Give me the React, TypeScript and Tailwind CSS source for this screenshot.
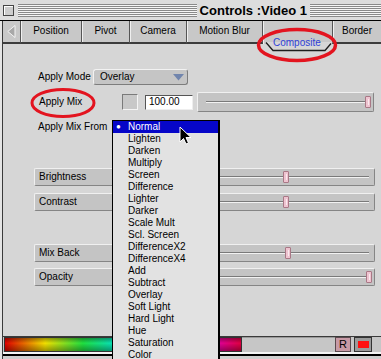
import React from "react";

const blendModes = [
  "Normal",
  "Lighten",
  "Darken",
  "Multiply",
  "Screen",
  "Difference",
  "Lighter",
  "Darker",
  "Scale Mult",
  "Scl. Screen",
  "DifferenceX2",
  "DifferenceX4",
  "Add",
  "Subtract",
  "Overlay",
  "Soft Light",
  "Hard Light",
  "Hue",
  "Saturation",
  "Color",
];

const tabs = [
  { label: "Position", w: "w-[61px]" },
  { label: "Pivot", w: "w-[48px]" },
  { label: "Camera", w: "w-[57px]" },
  { label: "Motion Blur", w: "w-[76px]" },
];

const stripes =
  "bg-[repeating-linear-gradient(to_bottom,#8a8a8a_0px,#8a8a8a_1px,#f6f6f6_1px,#f6f6f6_2px)]";

function Thumb({ left }: { left: number }) {
  return (
    <div
      className="absolute top-[2px] flex h-[12px] w-[6px] justify-center rounded-[1px] border border-[#a97886] bg-[#eec4d0]"
      style={{ left }}
    >
      <div className="mt-[2px] h-[6px] w-[1px] bg-[#fbe8ee]" />
    </div>
  );
}

function Track({ from }: { from: number }) {
  return (
    <div
      className="absolute right-[5px] top-[7px] h-0 border-b border-t border-b-[#f2f2f2] border-t-[#7a7a7a]"
      style={{ left: from }}
    />
  );
}

function ParamBar({ label, thumb }: { label: string; thumb: number }) {
  return (
    <div className="relative ml-[31px] flex h-[18px] w-[341px] items-center rounded-[2px] border border-b-[#858585] border-l-[#f0f0f0] border-r-[#858585] border-t-[#f0f0f0] bg-[#c4c4c4] pl-[4px]">
      <span>{label}</span>
      <Track from={90} />
      <Thumb left={thumb} />
    </div>
  );
}

export default function App() {
  return (
    <div className="relative h-[359px] w-[381px] overflow-hidden bg-[#d6d6d6] font-['Liberation_Sans',Arial,sans-serif] text-[10px] leading-none text-black">
      {/* title bar */}
      <div className="flex h-[21px] items-center border-b border-black bg-[#dddddd]">
        <div className="ml-[3px] h-[11px] w-[11px] border border-[#454545] bg-[#cdcdcd] shadow-[inset_1px_1px_0_#fff]" />
        <div className={`ml-[4px] h-[13px] flex-1 ${stripes}`} />
        <div className="px-[3px] text-[13px] font-bold">Controls :Video 1</div>
        <div className={`h-[13px] w-[71px] ${stripes}`} />
      </div>

      <div className="flex h-[338px] bg-[#e4e4e4] pl-[2px]">
        <div className="flex flex-1 flex-col border-l border-[#3a3a3a]">
          {/* tabs */}
          <div className="relative z-10 flex h-[23px] shrink-0 bg-[#c8c8c8]">
            <div className="flex w-[18px] items-center justify-center border-b-2 border-r border-b-[#3c3c3c] border-r-[#555]">
              <svg width="9" height="13" viewBox="0 0 9 13">
                <path d="M8 0.5 L0.8 6.5 L8 12.5 Z" fill="#a8a8a8" stroke="#f4f4f4" strokeWidth="1" />
              </svg>
            </div>
            {tabs.map((t) => (
              <div
                key={t.label}
                className={`flex ${t.w} items-center justify-center border-b-2 border-r border-b-[#3c3c3c] border-r-[#555] pb-[1px] shadow-[inset_1px_0_0_#efefef]`}
              >
                {t.label}
              </div>
            ))}
            <div className="relative w-[70px] border-r border-[#555] shadow-[inset_1px_0_0_#efefef]">
              <svg className="absolute left-0 top-[21px]" width="70" height="10" viewBox="0 0 70 10">
                <path d="M0 0 L3 0 L10 8 L62 8 L68 1 L70 0 Z" fill="#d6d6d6" />
                <path d="M3 0.5 L10 8.5 L62 8.5 L68 1.5" fill="none" stroke="#1c1c1c" strokeWidth="1.3" />
              </svg>
              <span className="absolute left-[10px] top-[17px] text-[#2f3fd8]">Composite</span>
            </div>
            <div className="flex flex-1 items-center justify-center border-b-2 border-b-[#3c3c3c] pb-[1px] shadow-[inset_1px_0_0_#efefef]">
              Border
            </div>
          </div>

          {/* panel body */}
          <div className="flex h-[292px] shrink-0 flex-col bg-[#d6d6d6]">
            <div className="mt-[25px] flex h-[16px] items-center">
              <span className="ml-[35px] w-[55px]">Apply Mode</span>
              <div className="flex h-[16px] w-[95px] items-center justify-between rounded-[3px] border border-b-[#7d7d7d] border-l-[#f2f2f2] border-r-[#7d7d7d] border-t-[#f2f2f2] bg-[#c5c5c5] pl-[6px] pr-[3px]">
                <span>Overlay</span>
                <svg width="11" height="7" viewBox="0 0 11 7">
                  <path d="M0 0 L11 0 L5.5 6.5 Z" fill="#7185ad" />
                </svg>
              </div>
            </div>

            <div className="mt-[7px] flex h-[20px] items-center">
              <span className="ml-[36px] w-[83px]">Apply Mix</span>
              <div className="h-[16px] w-[16px] border border-b-[#f4f4f4] border-l-[#7a7a7a] border-r-[#f4f4f4] border-t-[#7a7a7a] bg-[#c8c8c8]" />
              <div className="ml-[7px] flex h-[15px] w-[48px] items-center border border-b-[#eee] border-l-[#555] border-r-[#eee] border-t-[#555] bg-white pl-[3px]">
                100.00
              </div>
              <div className="relative ml-[4px] h-[20px] w-[177px] rounded-[2px] border border-b-[#858585] border-l-[#f0f0f0] border-r-[#858585] border-t-[#f0f0f0] bg-[#c4c4c4]">
                <div className="absolute left-[8px] right-[5px] top-[8px] h-0 border-b border-t border-b-[#f2f2f2] border-t-[#7a7a7a]" />
                <div className="absolute left-[167px] top-[3px] flex h-[12px] w-[6px] justify-center rounded-[1px] border border-[#a97886] bg-[#eec4d0]">
                  <div className="mt-[2px] h-[6px] w-[1px] bg-[#fbe8ee]" />
                </div>
              </div>
            </div>

            <div className="mt-[8px] flex h-[14px] items-center">
              <span className="ml-[35px]">Apply Mix From</span>
            </div>

            <div className="mt-[34px]">
              <ParamBar label="Brightness" thumb={248} />
            </div>
            <div className="mt-[7px]">
              <ParamBar label="Contrast" thumb={248} />
            </div>
            <div className="mt-[33px]">
              <ParamBar label="Mix Back" thumb={250} />
            </div>
            <div className="mt-[6px]">
              <ParamBar label="Opacity" thumb={331} />
            </div>
          </div>

          {/* bottom bar */}
          <div className="flex h-[16px] shrink-0 items-stretch border-t border-[#3a3a3a] bg-[#c6c6c6]">
            <div className="relative ml-[1px] w-[238px] border border-[#333] bg-[linear-gradient(to_right,#e00000,#f2e000_17%,#20e040_33%,#00e0e0_50%,#1020e0_67%,#e000e0_83%,#e00040)]">
              <div className="absolute inset-0 bg-[linear-gradient(to_bottom,rgba(0,0,0,0.35),rgba(0,0,0,0)_40%,rgba(0,0,0,0.35))]" />
            </div>
            <div className="flex-1 border-t border-[#9a9a9a]" />
            <div className="flex w-[16px] items-center justify-center border border-[#5a4a4e] bg-[#c89aa6] text-[11px]">
              R
            </div>
            <div className="ml-[3px] flex w-[18px] items-center justify-center border border-[#333] bg-[#9a9a9a]">
              <div className="h-[7px] w-[11px] bg-[#ff1010]" />
            </div>
            <div className="w-[9px]" />
          </div>
          <div className="h-[2px] shrink-0 bg-[#f4f4f4]" />
          <div className="h-[2px] shrink-0 bg-black" />
          <div className="flex-1 bg-[#cfcfcf]" />
        </div>
      </div>

      {/* pop-up menu */}
      <div className="absolute left-[112px] top-[120px] z-20 w-[108px] border-l border-r-2 border-t border-black bg-[#e2e2e2] pb-[20px]">
        {blendModes.map((m, i) => (
          <div
            key={m}
            className={`relative flex h-[12px] items-center pl-[15px] ${i === 0 ? "bg-[#0606c8] text-white" : ""}`}
          >
            {i === 0 && <span className="absolute left-[3px] text-[8px]">●</span>}
            {m}
          </div>
        ))}
      </div>

      {/* annotations */}
      <svg className="pointer-events-none absolute inset-0 z-30" width="381" height="359" viewBox="0 0 381 359">
        <ellipse cx="63" cy="103" rx="31" ry="13.5" fill="none" stroke="#e3141f" strokeWidth="3" />
        <ellipse cx="297" cy="45" rx="38.5" ry="15.5" fill="none" stroke="#e3141f" strokeWidth="3.5" />
        <path
          d="M180 127 L180 142 L183.5 138.5 L186 144 L188.5 143 L186 137.5 L191 137.5 Z"
          fill="#000"
          stroke="#fff"
          strokeWidth="1"
          strokeLinejoin="round"
        />
      </svg>
    </div>
  );
}
